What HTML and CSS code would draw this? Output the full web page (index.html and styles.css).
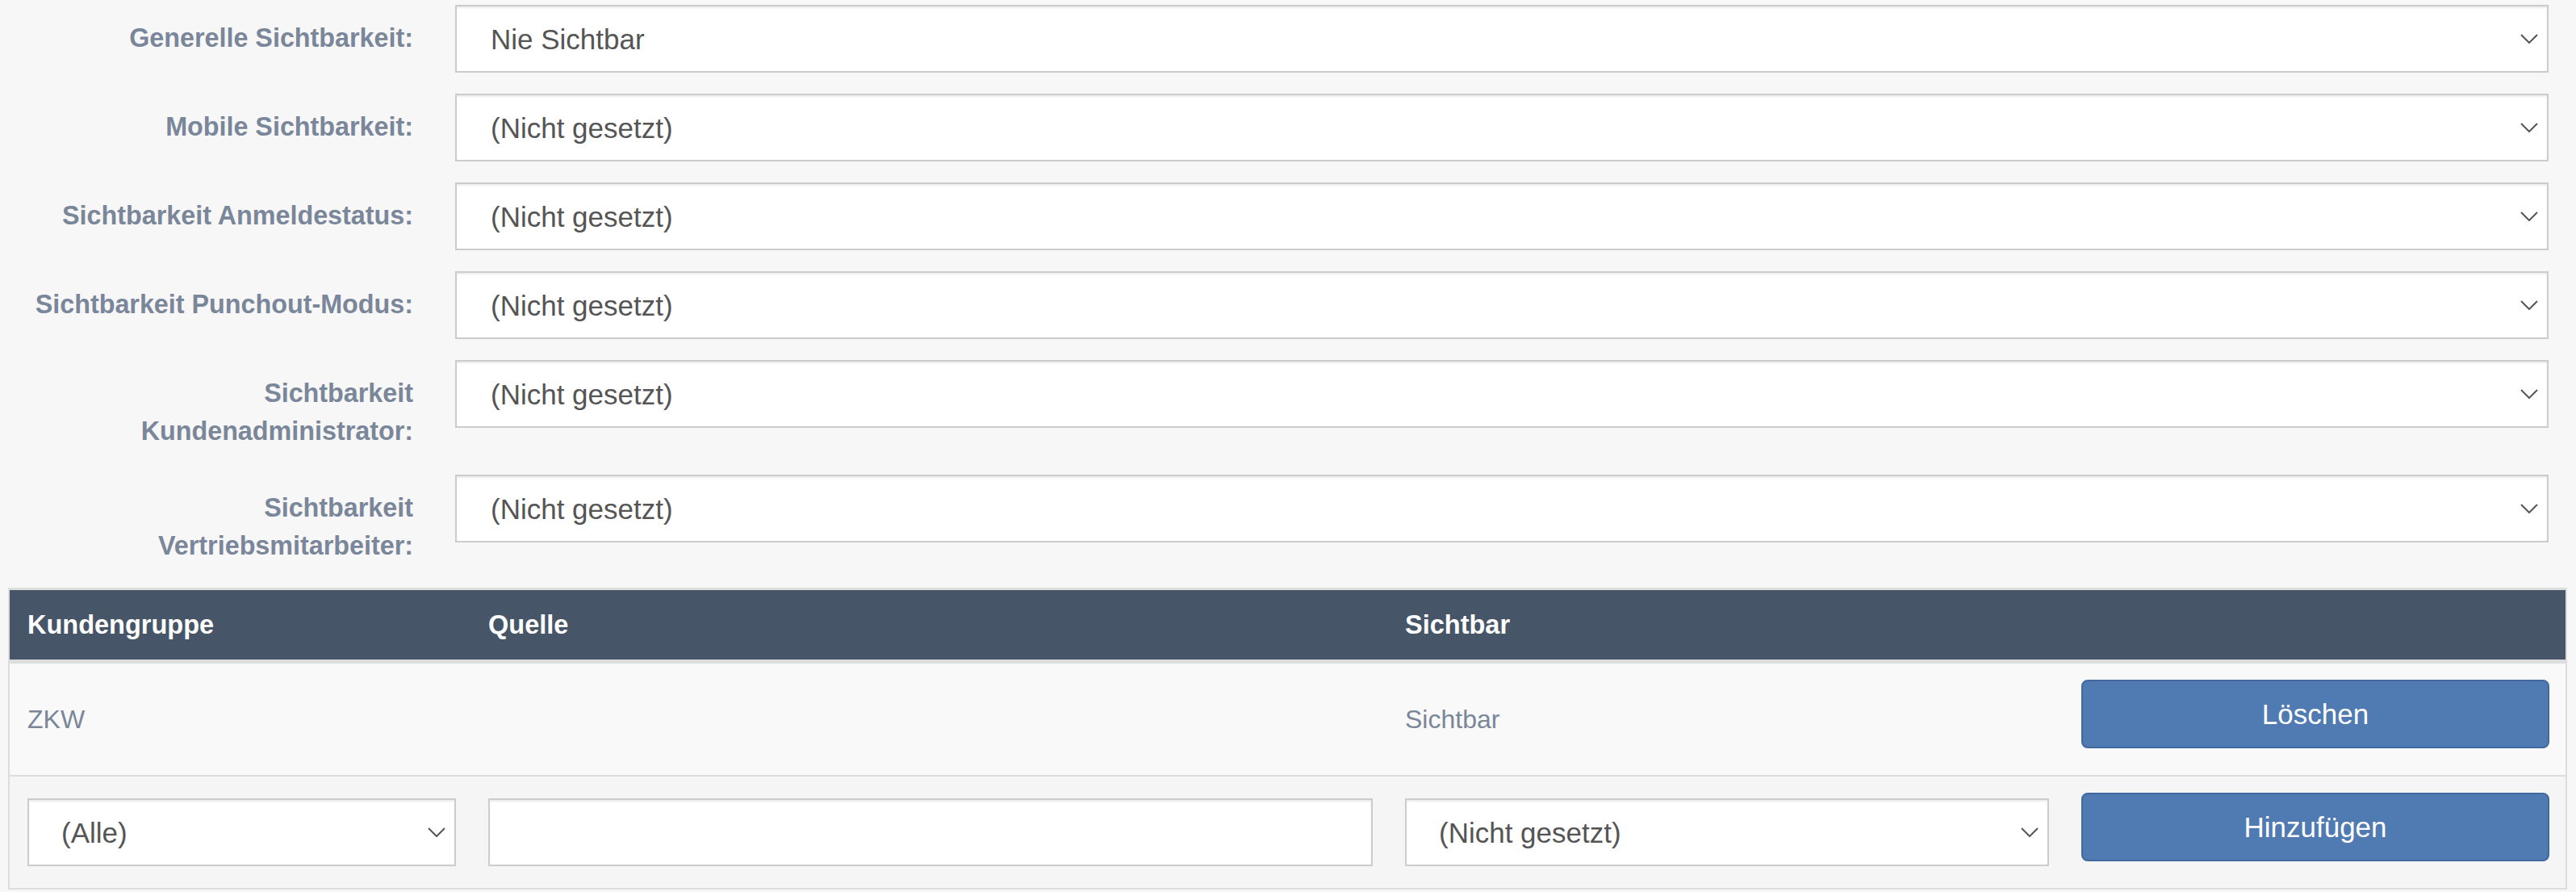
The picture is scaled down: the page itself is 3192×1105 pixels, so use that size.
FILE: index.html
```html
<!DOCTYPE html>
<html lang="de">
<head>
<meta charset="utf-8">
<title>Sichtbarkeit</title>
<link rel="stylesheet" href="styles.css">
</head>
<body>
<form class="settings">
  <div class="field">
    <label class="field-label">Generelle Sichtbarkeit:</label>
    <div class="select-wrap">
      <select class="control"><option>Nie Sichtbar</option></select>
      <svg class="chev" viewBox="0 0 22 12" width="22" height="12"><path d="M1 1 L11 11 L21 1"/></svg>
    </div>
  </div>
  <div class="field">
    <label class="field-label">Mobile Sichtbarkeit:</label>
    <div class="select-wrap">
      <select class="control"><option>(Nicht gesetzt)</option></select>
      <svg class="chev" viewBox="0 0 22 12" width="22" height="12"><path d="M1 1 L11 11 L21 1"/></svg>
    </div>
  </div>
  <div class="field">
    <label class="field-label">Sichtbarkeit Anmeldestatus:</label>
    <div class="select-wrap">
      <select class="control"><option>(Nicht gesetzt)</option></select>
      <svg class="chev" viewBox="0 0 22 12" width="22" height="12"><path d="M1 1 L11 11 L21 1"/></svg>
    </div>
  </div>
  <div class="field">
    <label class="field-label">Sichtbarkeit Punchout-Modus:</label>
    <div class="select-wrap">
      <select class="control"><option>(Nicht gesetzt)</option></select>
      <svg class="chev" viewBox="0 0 22 12" width="22" height="12"><path d="M1 1 L11 11 L21 1"/></svg>
    </div>
  </div>
  <div class="field">
    <label class="field-label">Sichtbarkeit Kundenadministrator:</label>
    <div class="select-wrap">
      <select class="control"><option>(Nicht gesetzt)</option></select>
      <svg class="chev" viewBox="0 0 22 12" width="22" height="12"><path d="M1 1 L11 11 L21 1"/></svg>
    </div>
  </div>
  <div class="field">
    <label class="field-label">Sichtbarkeit Vertriebsmitarbeiter:</label>
    <div class="select-wrap">
      <select class="control"><option>(Nicht gesetzt)</option></select>
      <svg class="chev" viewBox="0 0 22 12" width="22" height="12"><path d="M1 1 L11 11 L21 1"/></svg>
    </div>
  </div>
</form>

<div class="grid-table">
  <div class="trow head">
    <div class="cell first">Kundengruppe</div>
    <div class="cell">Quelle</div>
    <div class="cell">Sichtbar</div>
    <div class="cell"></div>
  </div>
  <div class="trow body odd">
    <div class="cell first text">ZKW</div>
    <div class="cell text"></div>
    <div class="cell text">Sichtbar</div>
    <div class="cell"><button type="button" class="btn">Löschen</button></div>
  </div>
  <div class="trow body even">
    <div class="cell first">
      <div class="select-wrap">
        <select class="control small"><option>(Alle)</option></select>
        <svg class="chev" viewBox="0 0 22 12" width="22" height="12"><path d="M1 1 L11 11 L21 1"/></svg>
      </div>
    </div>
    <div class="cell"><input class="control" type="text"></div>
    <div class="cell">
      <div class="select-wrap">
        <select class="control small"><option>(Nicht gesetzt)</option></select>
        <svg class="chev" viewBox="0 0 22 12" width="22" height="12"><path d="M1 1 L11 11 L21 1"/></svg>
      </div>
    </div>
    <div class="cell"><button type="button" class="btn">Hinzufügen</button></div>
  </div>
</div>
</body>
</html>
```
FILE: styles.css
```css
html, body {
  margin: 0;
  padding: 0;
  background: #f7f7f7;
  font-family: "Liberation Sans", Arial, Helvetica, sans-serif;
}

.settings {
  display: flex;
  flex-direction: column;
  gap: 26px;
  padding: 6px 34px 0 0;
}

.field {
  display: grid;
  grid-template-columns: 512px 1fr;
  column-gap: 52px;
  align-items: start;
}

.field-label {
  padding: 18px 0 4px 16px;
  text-align: right;
  font-weight: bold;
  font-size: 32.3px;
  line-height: 47px;
  color: #7a8699;
}

.select-wrap {
  position: relative;
}

.control {
  display: block;
  box-sizing: border-box;
  width: 100%;
  height: 84px;
  margin: 0;
  padding: 0 60px 0 42px;
  border: 2px solid #cccccc;
  border-radius: 0;
  background: #ffffff;
  box-shadow: inset 0 2px 2px rgba(0, 0, 0, 0.075);
  font-family: "Liberation Sans", Arial, Helvetica, sans-serif;
  font-size: 35px;
  color: #555555;
  -webkit-appearance: none;
  appearance: none;
  outline: none;
}

.control.small {
  padding-left: 40px;
}

.chev {
  position: absolute;
  right: 13px;
  top: 50%;
  transform: translateY(-50%);
  fill: none;
  stroke: #555555;
  stroke-width: 2;
  pointer-events: none;
}

.grid-table {
  margin: 24px 11px 0 10px;
  border: 2px solid #dddddd;
  border-top-width: 3px;
}

.trow {
  display: grid;
  grid-template-columns: 573px 1136px 838px 1fr;
  align-items: center;
}

.cell {
  padding: 0 20px;
  min-width: 0;
}

.cell.first {
  padding-left: 22px;
}

.head {
  background: #475569;
  color: #ffffff;
  font-weight: bold;
  font-size: 32.5px;
  line-height: 46px;
  border-bottom: 5px solid #dddddd;
}

.head .cell {
  padding-top: 20px;
  padding-bottom: 20px;
}

.body {
  padding: 20px 0;
  font-size: 32px;
  color: #7a8699;
}

.body.odd {
  background: #f9f9f9;
  border-bottom: 2px solid #dddddd;
}

.body.even {
  background: #f5f5f5;
}

.btn {
  display: block;
  box-sizing: border-box;
  width: 100%;
  height: 85px;
  margin: 0 0 13px 0;
  padding: 0;
  background: #4f7ab2;
  border: 2px solid #42699f;
  border-radius: 8px;
  color: #ffffff;
  font-family: "Liberation Sans", Arial, Helvetica, sans-serif;
  font-size: 35px;
  cursor: pointer;
}
```
